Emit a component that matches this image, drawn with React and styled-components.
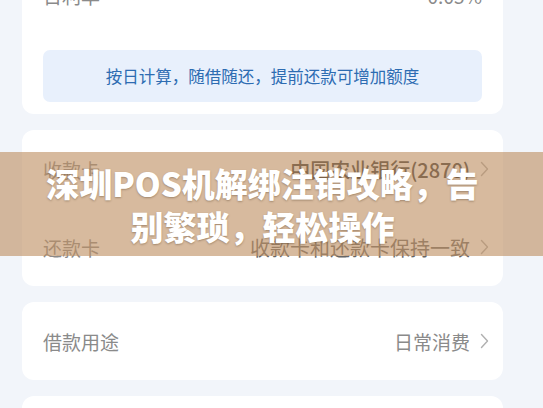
import React from 'react'
import styled, { createGlobalStyle } from 'styled-components'

const GlobalStyle = createGlobalStyle`
  html, body {
    margin: 0;
    padding: 0;
    background: #f2f5fa;
    font-family: "Noto Sans CJK SC", "Noto Sans", sans-serif;
  }
`;

const Screen = styled.div`
  position: relative;
  width: 543px;
  height: 408px;
  overflow: hidden;
  background: #f2f5fa;
`;

const Page = styled.div`
  display: flex;
  flex-direction: column;
  gap: 16px;
  width: 481px;
  margin: -44px 0 0 22px;
`;

const Card = styled.div`
  display: flex;
  flex-direction: column;
  background: #fff;
  border-radius: 12px;
  padding: ${props => props.padding || '0 21px'};
`;

const Row = styled.div`
  display: flex;
  align-items: center;
  justify-content: space-between;
  height: 78px;
  font-size: 19px;
`;

const Label = styled.span`
  color: #8a8a8a;
`;

const Value = styled.span`
  display: flex;
  align-items: center;
  gap: 10px;
  color: ${props => props.color || '#8a8a8a'};
  font-size: ${props => props.size || '19px'};
  font-weight: ${props => props.weight || 400};
`;

const Arrow = styled.svg`
  margin-right: -7px;
`;

const Note = styled.div`
  display: flex;
  align-items: center;
  justify-content: center;
  height: 52px;
  margin-top: 16px;
  border-radius: 7px;
  background: #e8f0fc;
  color: #2d6cb2;
  font-size: 16.5px;
`;

const Banner = styled.div`
  position: absolute;
  left: 0;
  right: 0;
  top: 152px;
  height: 104px;
  box-sizing: border-box;
  padding: 10px 60px 8px 42px;
  background: rgba(191, 143, 98, 0.62);
  display: flex;
  align-items: center;
  justify-content: center;
`;

const Title = styled.h1`
  margin: 0;
  color: #fff;
  font-size: 33px;
  font-weight: 900;
  line-height: 43px;
  text-align: center;
  text-shadow: 0 1px 2px rgba(60, 40, 20, 0.35);
`;

const Chevron = () => (
  <Arrow width="9" height="16" viewBox="0 0 9 16" fill="none">
    <polyline points="1.5,1.5 7.5,8 1.5,14.5" stroke="#b0b0b0" strokeWidth="1.4" strokeLinecap="round" strokeLinejoin="round" />
  </Arrow>
);

const App = () => {
  return (
    <>
      <GlobalStyle />
      <Screen>
        <Page>
          <Card padding="0 21px 12px">
            <Row>
              <Label>日利率</Label>
              <Value>0.05%</Value>
            </Row>
            <Note>按日计算，随借随还，提前还款可增加额度</Note>
          </Card>
          <Card>
            <Row>
              <Label>收款卡</Label>
              <Value color="#333" size="20px" weight={500}>中国农业银行(2870)<Chevron /></Value>
            </Row>
            <Row>
              <Label>还款卡</Label>
              <Value color="#666" size="20px">收款卡和还款卡保持一致<Chevron /></Value>
            </Row>
          </Card>
          <Card>
            <Row>
              <Label>借款用途</Label>
              <Value>日常消费<Chevron /></Value>
            </Row>
          </Card>
          <Card>
            <Row>
              <Label>借款期限</Label>
              <Value>12个月<Chevron /></Value>
            </Row>
          </Card>
        </Page>
        <Banner>
          <Title>深圳POS机解绑注销攻略，告别繁琐，轻松操作</Title>
        </Banner>
      </Screen>
    </>
  )
}

export default App
